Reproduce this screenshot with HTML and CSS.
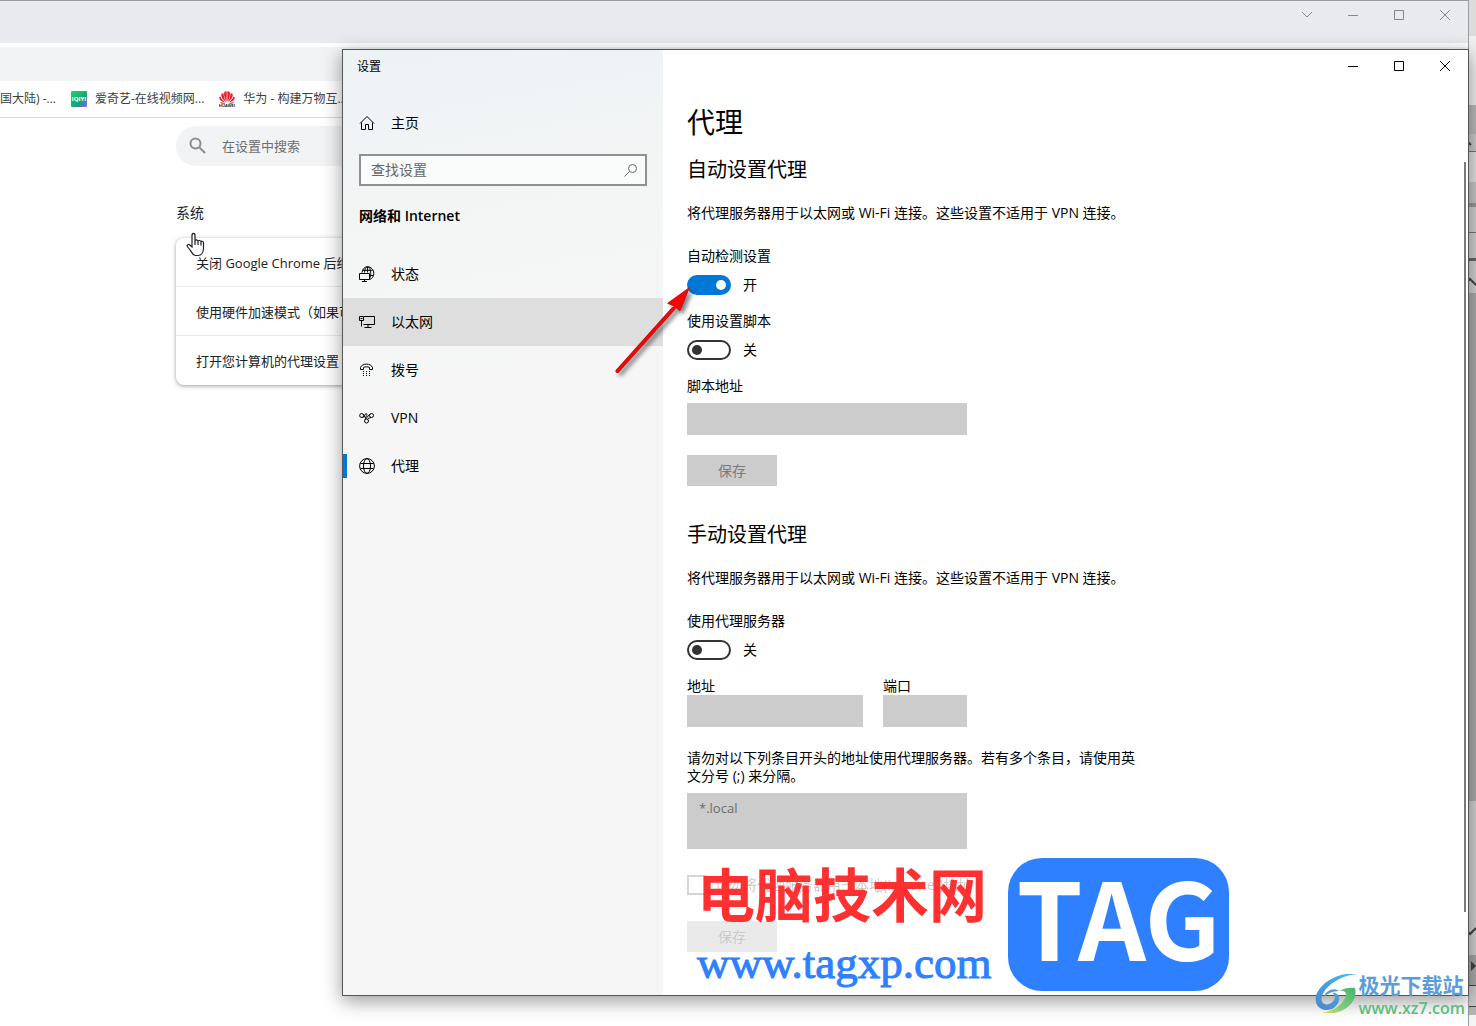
FILE: index.html
```html
<!DOCTYPE html>
<html lang="zh-CN">
<head>
    <meta charset="UTF-8">
    <meta name="viewport" content="width=device-width, initial-scale=1.0">
    <title>设置</title>
    <link rel="stylesheet" href="styles.css">
</head>
<body>
    <div class="desktop">
        <svg class="desktop-marks" width="8" height="1026" viewBox="0 0 8 1026" fill="none" stroke="#444" stroke-width="2">
            <path d="M0 142l3 3M0 281l2-2 6 6M0 932l2 2 6-6"/>
            <path d="M3 961l5 5-5 5z" fill="#444" stroke="none"/>
        </svg>

        <!-- Chrome -->
        <div class="browser">
            <div class="tab-strip">
                <div class="window-buttons">
                    <button aria-label="标签页"><svg width="12" height="12" viewBox="0 0 12 12"><path d="M1 3l5 5 5-5"/></svg></button>
                    <button aria-label="最小化"><svg width="12" height="12" viewBox="0 0 12 12"><path d="M1 6.500h10"/></svg></button>
                    <button aria-label="最大化"><svg width="12" height="12" viewBox="0 0 12 12"><path d="M1.500 1.500h9v9h-9z"/></svg></button>
                    <button aria-label="关闭"><svg width="12" height="12" viewBox="0 0 12 12"><path d="M1 1l10 10M11 1L1 11"/></svg></button>
                </div>
            </div>
            <div class="toolbar"></div>
            <div class="bookmarks">
                <a href="#">国大陆) -...</a>
                <a href="#">
                    <svg width="16" height="16" viewBox="0 0 16 16">
                        <defs>
                            <linearGradient id="iqiyi" x1="0" y1="0" x2="1" y2="1">
                                <stop offset="0" stop-color="#1fd66a"/>
                                <stop offset=".6" stop-color="#14a774"/>
                                <stop offset=".8" stop-color="#4a7cc4"/>
                                <stop offset="1" stop-color="#c04bff"/>
                            </linearGradient>
                        </defs>
                        <rect width="16" height="16" rx="1" fill="url(#iqiyi)"/>
                        <text class="iqiyi-text" x="8" y="10" text-anchor="middle">iQIYI</text>
                    </svg>
                    爱奇艺-在线视频网...
                </a>
                <a href="#">
                    <svg width="16" height="16" viewBox="0 0 16 16">
                        <g fill="#e8202a">
                            <path d="M7.600 11C5.300 7 4.400 3 5.400 1c1-.8 2-.8 2.300-.3z"/>
                            <path d="M8.400 11c2.300-4 3.200-8 2.200-10-1-.8-2-.8-2.300-.3z"/>
                            <path d="M7 11C3.500 8.500 1.800 5.500 2.300 3c1-.9 1.700-1 2.200-.7C4.600 5 5.500 8 7 11z"/>
                            <path d="M9 11c3.500-2.500 5.200-5.500 4.700-8-1-.9-1.700-1-2.200-.7C11.400 5 10.500 8 9 11z"/>
                            <path d="M6.500 11.500C3.500 11.300.5 9.500.2 6.500c.4-.8.8-1 1.200-1C2.500 8 4 9.800 6.500 11.500z"/>
                            <path d="M9.500 11.500c3-.2 6-2 6.300-5-.4-.8-.8-1-1.200-1C13.500 8 12 9.800 9.500 11.500z"/>
                            <path d="M6.500 12.300c-2 1-4.300.7-5.500-1.300zM9.500 12.300c2 1 4.300.7 5.500-1.300z"/>
                        </g>
                        <text class="huawei-text" x="8" y="16" text-anchor="middle">HUAWEI</text>
                    </svg>
                    华为 - 构建万物互...
                </a>
            </div>
            <div class="browser-page">
                <label class="page-search">
                    <svg width="18" height="18" viewBox="0 0 18 18" fill="none" stroke="#8b8e91" stroke-width="2"><circle cx="7.500" cy="6.500" r="5"/><path d="M11.500 10.500l5.500 5.500"/></svg>
                    <input type="text" placeholder="在设置中搜索" aria-label="在设置中搜索">
                </label>
                <h2>系统</h2>
                <ul class="card">
                    <li>关闭 Google Chrome 后继续运行后台应用</li>
                    <li>使用硬件加速模式（如果可用）</li>
                    <li>打开您计算机的代理设置</li>
                </ul>
            </div>
        </div>

        <svg class="cursor" width="20" height="26" viewBox="0 0 20 26" fill="#fff" stroke="#1c1c28" stroke-width="1.200">
            <path d="M6 15V3.500C6 .6 9 .6 9 3.500V9c0-1.500 3-1.500 3 .5 0-1.500 3-1.300 3 .5 0-1.300 2.500-1 2.500.8V16c0 4-2 7.500-5.500 7.500H9.500C7 23.500 6 21 4.500 18.500L1.300 14.500C.5 13 2.500 11.800 3.800 13z"/>
            <path d="M9 9v4M12 9.500V13M15 10v3.500"/>
        </svg>

        <!-- Windows settings -->
        <div class="settings">
            <aside class="sidebar">
                <div class="title">设置</div>
                <a class="nav-item home" href="#">
                    <svg width="16" height="16" viewBox="0 0 16 16"><path d="M1 8.500L8 1.500l7 7M2.500 7.500v7h4V9.500h3v5h4v-7"/></svg>
                    主页
                </a>
                <label class="search-box">
                    <input type="text" placeholder="查找设置" aria-label="查找设置">
                    <svg width="14" height="14" viewBox="0 0 14 14" fill="none" stroke="#666"><circle cx="8.500" cy="5.500" r="4"/><path d="M5.500 8.500l-5 5"/></svg>
                </label>
                <h3>网络和 Internet</h3>
                <nav>
                    <a class="nav-item" href="#">
                        <svg width="16" height="16" viewBox="0 0 16 16"><path d="M3 6.500C3.500 3 5.500.8 8.500.8c3.700 0 6.300 3 6.300 6.500 0 3.300-1.800 5.700-4.300 6.200M5.500 6.500C5.800 3 7 .8 8.700.8c1.800 0 3 2.800 3 6.500 0 2-.4 4-1 5M8.600 1v5.500M3.700 4.300h10M11 9.500h3.500M.5 7.500h10v6H.5zM5.500 13.500v2M3 15.500h5"/></svg>
                        状态
                    </a>
                    <a class="nav-item hover" href="#">
                        <svg width="16" height="16" viewBox="0 0 16 16"><path d="M5 2.500h10.500v8H4.500M9 10.500v2.500M5.500 13.500h7M.5 2.500h4v4h-4zM2.500 6.500v6M1.500 4.500h2"/></svg>
                        以太网
                    </a>
                    <a class="nav-item" href="#">
                        <svg width="16" height="16" viewBox="0 0 16 16"><path d="M1.500 7.500V5.500C3 1 12 1 13.500 5.500v2h-3V5.500c-2-1-4-1-6 0v2z"/><path d="M4 9.500h1M7 9.500h1M10 9.500h1M4 11.500h1M7 11.500h1M10 11.500h1M4 13.500h1M7 13.500h1M10 13.500h1"/></svg>
                        拨号
                    </a>
                    <a class="nav-item" href="#">
                        <svg width="16" height="16" viewBox="0 0 16 16"><circle cx="2.700" cy="5.500" r="2"/><circle cx="12.500" cy="5.500" r="2"/><circle cx="7.500" cy="11" r="2"/><path d="M4 4l3 4.500M3.500 7.500C6 7.500 5.500 3.500 7 3.500s1 2.500-.5 4M11 4L6 9.500M12 7.500c-1.500.5-3 .5-3.500 2"/></svg>
                        VPN
                    </a>
                    <a class="nav-item active" href="#">
                        <svg width="16" height="16" viewBox="0 0 16 16"><circle cx="8" cy="8" r="7.400"/><ellipse cx="8" cy="8" rx="3.500" ry="7.400"/><path d="M1.500 5.500h13M1.500 10.500h13"/></svg>
                        代理
                    </a>
                </nav>
            </aside>

            <main class="content">
                <div class="window-buttons dark">
                    <button aria-label="最小化"><svg width="12" height="12" viewBox="0 0 12 12"><path d="M1 6.500h10"/></svg></button>
                    <button aria-label="最大化"><svg width="12" height="12" viewBox="0 0 12 12"><path d="M1.500 1.500h9v9h-9z"/></svg></button>
                    <button aria-label="关闭"><svg width="12" height="12" viewBox="0 0 12 12"><path d="M1 1l10 10M11 1L1 11"/></svg></button>
                </div>

                <form class="form">
                    <h1>代理</h1>

                    <h2>自动设置代理</h2>
                    <p>将代理服务器用于以太网或 Wi-Fi 连接。这些设置不适用于 VPN 连接。</p>
                    <label class="first" for="autoDetect">自动检测设置</label>
                    <div class="switch"><input type="checkbox" id="autoDetect" checked><span>开</span></div>
                    <label for="useScript">使用设置脚本</label>
                    <div class="switch"><input type="checkbox" id="useScript"><span>关</span></div>
                    <label for="scriptUrl">脚本地址</label>
                    <input class="field script-field" type="text" id="scriptUrl" disabled>
                    <button class="save" type="button" disabled>保存</button>

                    <h2 class="manual">手动设置代理</h2>
                    <p>将代理服务器用于以太网或 Wi-Fi 连接。这些设置不适用于 VPN 连接。</p>
                    <label class="first" for="useProxy">使用代理服务器</label>
                    <div class="switch"><input type="checkbox" id="useProxy"><span>关</span></div>
                    <div class="address-row">
                        <div class="address">
                            <label for="address">地址</label>
                            <input class="field" type="text" id="address" disabled>
                        </div>
                        <div class="port">
                            <label for="port">端口</label>
                            <input class="field" type="text" id="port" disabled>
                        </div>
                    </div>
                    <label class="bypass-label" for="bypass">请勿对以下列条目开头的地址使用代理服务器。若有多个条目，请使用英文分号 (;) 来分隔。</label>
                    <textarea class="field" id="bypass" disabled>*.local</textarea>
                    <div class="faded">
                        <label class="check"><input type="checkbox" disabled>请勿将代理服务器用于本地(Intranet)地址</label>
                        <button class="save" type="button" disabled>保存</button>
                    </div>
                </form>
            </main>

            <div class="scrollbar"></div>
        </div>

        <svg class="arrow" width="90" height="100" viewBox="0 0 90 100">
            <path d="M7.500 86L63 24" stroke="#8a2020" stroke-width="4" stroke-linecap="round"/>
            <path d="M79.300 2.700L57.700 18.300l6.600 2.700 5.700 4.700z" fill="#f00" stroke="#b01818"/>
            <path d="M7.500 86L67 20" stroke="#f00" stroke-width="3" stroke-linecap="round"/>
        </svg>

        <div class="tag-mark">
            <div class="tag-names">
                <strong>电脑技术网</strong>
                <span>www.tagxp.com</span>
            </div>
            <div class="tag-logo">TAG</div>
        </div>

        <div class="site-mark">
            <svg width="42" height="40" viewBox="0 0 42 40">
                <defs>
                    <linearGradient id="swirlBlue" x1="1" y1="0" x2="0" y2="1">
                        <stop offset="0" stop-color="#45bdf5"/>
                        <stop offset="1" stop-color="#4d86c6"/>
                    </linearGradient>
                    <linearGradient id="swirlGreen" x1="1" y1="0" x2="0" y2="1">
                        <stop offset="0" stop-color="#45b56c"/>
                        <stop offset=".6" stop-color="#7fcb7b"/>
                        <stop offset="1" stop-color="#eadb62"/>
                    </linearGradient>
                </defs>
                <path d="M42 0C24-2 8 7 2 19c-4 9 1 17 10 17 6 0 11-4 12-10 1-5-3-8-7-7 3 1 4 4 2 7-2 4-8 6-11 3-3-4-1-9 3-14C17 8 29 1 42 0z" fill="url(#swirlBlue)"/>
                <path d="M24 17c-5-4-13-1-15 6 4-4 9-6 15-6z" fill="#5b98d2"/>
                <path d="M40 14c-4-1-11 0-16 3 7-1 9 3 5 9-4 6-10 10-22 13h13c13-3 23-13 20-25z" fill="url(#swirlGreen)"/>
            </svg>
            <div class="site-names">
                <strong>极光下载站</strong>
                <span>www.xz7.com</span>
            </div>
        </div>
    </div>
</body>
</html>
```
FILE: styles.css
```css
* {
    box-sizing: border-box;
}

body {
    margin: 0;
    font-family: "Open Sans", "Noto Sans CJK SC", sans-serif;
    font-size: 14px;
    line-height: 18px;
    color: #000;
}

h1, h2, h3, p, ul {
    margin: 0;
    padding: 0;
    font-weight: normal;
}

a {
    color: inherit;
    text-decoration: none;
}

input,
button,
textarea {
    font: inherit;
}

.desktop {
    position: relative;
    height: 100vh;
    min-height: 1026px;
    overflow: hidden;
    padding-right: 7px;
    /* windows that show past the right edge */
    background: linear-gradient(#dcdcda 36px, #f0f0f0 36px 105px, #b8b8b8 105px 134px, #c8c8c8 134px 151px, #777 151px 152px, #e0e0e0 152px 182px, #c4c4c4 182px 203px, #999 203px 207px, #cfcfcf 207px 232px, #777 232px 233px, #cfcfcf 233px 258px, #666 258px 261px, #d0d0d0 261px 293px, #aaa 293px 801px, #cfcfcf 801px 955px, #a5a5a5 955px 970px, #aaa 970px 985px, #444 985px 986px, #ccc 986px 1006px, #444 1006px 1007px, #b5b5b5 1007px 1015px, #f4f4f4 1015px);
}

.desktop-marks {
    position: absolute;
    top: 0;
    right: 0;
}

/* Browser */
.browser {
    height: 100%;
    background: #fff;
    border-top: 1px solid #9b9ba1;
    border-right: 1px solid #9b9ba1;
}

.tab-strip {
    height: 42px;
    background: #e8eaed;
}

.window-buttons {
    display: flex;
    justify-content: flex-end;
}

.window-buttons button {
    display: flex;
    align-items: center;
    justify-content: center;
    width: 46px;
    height: 28px;
    padding: 0;
    border: none;
    background: none;
}

.window-buttons svg {
    fill: none;
    stroke: #85878a;
}

.window-buttons.dark button {
    height: 32px;
}

.window-buttons.dark svg {
    stroke: #000;
}

.toolbar {
    height: 34px;
    margin-top: 4px;
    background: #f1f3f4;
}

.bookmarks {
    display: flex;
    align-items: center;
    gap: 15px;
    height: 37px;
    border-bottom: 1px solid #d8dadd;
    font-size: 12px;
    color: #3c4043;
}

.bookmarks a {
    display: flex;
    align-items: center;
    gap: 8px;
    white-space: nowrap;
}

.iqiyi-text {
    font-size: 6px;
    font-weight: bold;
    fill: #fff;
}

.huawei-text {
    font-size: 4px;
    font-weight: bold;
    fill: #222;
}

.browser-page {
    max-width: 856px;
    padding: 8px 0 0 176px;
    font-size: 13px;
    color: #202124;
}

.page-search {
    display: flex;
    align-items: center;
    gap: 14px;
    height: 40px;
    padding: 0 12px;
    border-radius: 20px;
    background: #f1f3f4;
}

.page-search input {
    flex: 1;
    padding: 0 2px;
    border: none;
    background: none;
}

.page-search input::placeholder {
    color: #6b6e72;
    opacity: 1;
}

.browser-page h2 {
    margin: 38px 0 16px;
    font-size: 14px;
}

.card {
    list-style: none;
    border-radius: 8px;
    box-shadow: 0 1px 4px rgba(60, 64, 67, 0.5);
}

.card li {
    height: 49px;
    padding: 0 20px;
    line-height: 50px;
    border-bottom: 1px solid #e9eaec;
}

.card li:last-child {
    border-bottom: none;
}

.cursor {
    position: absolute;
    left: 186px;
    top: 232px;
}

/* Settings window */
.settings {
    position: absolute;
    left: 342px;
    right: 7px;
    top: 49px;
    display: flex;
    background: #fff;
    border: 1px solid #555;
    box-shadow: 0 5px 18px rgba(0, 0, 0, 0.4);
}

.sidebar {
    width: 320px;
    background: linear-gradient(170deg, #edf2f5, #f3f5f5 15%, #f6f6f6 35%);
}

.title {
    height: 32px;
    padding-left: 14px;
    font-size: 12px;
    line-height: 34px;
}

.nav-item {
    position: relative;
    display: flex;
    align-items: center;
    gap: 16px;
    height: 48px;
    padding: 0 16px;
}

.nav-item svg {
    fill: none;
    stroke: #000;
}

.nav-item.home {
    margin: 17px 0 7px;
}

.nav-item.hover {
    background: #dedede;
}

.nav-item.active::before {
    content: "";
    position: absolute;
    left: 0;
    top: 12px;
    width: 4px;
    height: 24px;
    background: #0078d7;
}

.search-box {
    display: flex;
    align-items: center;
    height: 32px;
    margin: 0 16px;
    padding: 0 7px 0 10px;
    border: 2px solid #8f9090;
    background: #fafbfb;
}

.search-box input {
    flex: 1;
    padding: 0;
    border: none;
    background: none;
}

.search-box input::placeholder {
    color: #666;
    opacity: 1;
}

.sidebar h3 {
    margin: 18px 16px 22px;
    font-size: 14px;
    font-weight: 600;
    line-height: 24px;
}

.content {
    flex: 1;
}

.form {
    padding: 22px 24px 43px;
}

.form h1 {
    font-size: 28px;
    line-height: 36px;
}

.form h2 {
    margin: 18px 0 22px;
    font-size: 20px;
    line-height: 24px;
}

.form h2.manual {
    margin-top: 37px;
}

.form label {
    display: block;
    margin-top: 17px;
}

.form label.first {
    margin-top: 25px;
}

.switch {
    display: flex;
    align-items: center;
    gap: 12px;
    height: 20px;
    margin-top: 10px;
}

.switch input {
    appearance: none;
    display: flex;
    align-items: center;
    width: 44px;
    height: 20px;
    margin: 0;
    padding: 0 3px;
    border: 2px solid #333;
    border-radius: 10px;
}

.switch input::before {
    content: "";
    width: 10px;
    height: 10px;
    border-radius: 50%;
    background: #333;
}

.switch input:checked {
    justify-content: flex-end;
    border-color: #0078d7;
    background: #0078d7;
}

.switch input:checked::before {
    background: #fff;
}

.field {
    display: block;
    width: 100%;
    height: 32px;
    padding: 6px 12px;
    border: none;
    background: #ccc;
    color: #6d6d6d;
}

.script-field {
    max-width: 280px;
    margin-top: 8px;
}

.save {
    display: block;
    width: 90px;
    height: 31px;
    margin-top: 20px;
    padding: 0;
    border: none;
    background: #ccc;
    color: #7a7a7a;
}

.address-row {
    display: flex;
    gap: 20px;
}

.address {
    width: 176px;
}

.port {
    width: 84px;
}

.form .bypass-label {
    max-width: 456px;
    margin-top: 22px;
}

textarea.field {
    max-width: 280px;
    height: 56px;
    margin-top: 8px;
    font-size: 13px;
    resize: none;
}

.faded {
    opacity: 0.4;
}

.form .check {
    display: flex;
    align-items: center;
    gap: 8px;
    margin: 26px 0;
    color: #7a7a7a;
}

.check input {
    appearance: none;
    width: 20px;
    height: 20px;
    margin: 0;
    border: 2px solid #999;
}

.scrollbar {
    position: absolute;
    right: 2px;
    top: 112px;
    width: 2px;
    height: 750px;
    background: #7a7a7a;
}

.arrow {
    position: absolute;
    left: 610px;
    top: 285px;
    filter: drop-shadow(3px 3px 2px rgba(0, 0, 0, 0.5));
}

/* Watermarks */
.tag-mark {
    position: absolute;
    left: 697px;
    top: 858px;
    display: flex;
    gap: 17px;
}

.tag-names {
    width: 294px;
    white-space: nowrap;
}

.tag-names strong {
    display: block;
    font-family: "Noto Sans CJK SC", sans-serif;
    font-size: 58px;
    font-weight: bold;
    line-height: 68px;
    color: #ff3030;
}

.tag-names span {
    display: block;
    font-family: "Liberation Serif", serif;
    font-size: 45px;
    line-height: 74px;
    color: #2e80ff;
    -webkit-text-stroke: 1px #2e80ff;
}

.tag-logo {
    width: 221px;
    height: 133px;
    border-radius: 34px;
    background: #2e80ff;
    color: #fff;
    font-family: "Noto Sans CJK SC", sans-serif;
    font-size: 106px;
    font-weight: bold;
    line-height: 114px;
    text-align: center;
}

.site-mark {
    position: absolute;
    right: 11px;
    bottom: 8px;
    display: flex;
    gap: 2px;
}

.site-names {
    font-family: "Liberation Sans", "Noto Sans CJK SC", sans-serif;
    white-space: nowrap;
}

.site-names strong {
    display: block;
    font-size: 21px;
    line-height: 24px;
    color: #5d9cd8;
}

.site-names span {
    display: block;
    font-family: "Open Sans", sans-serif;
    font-size: 16px;
    font-weight: 600;
    line-height: 20px;
    color: #5cbd7c;
}
```
